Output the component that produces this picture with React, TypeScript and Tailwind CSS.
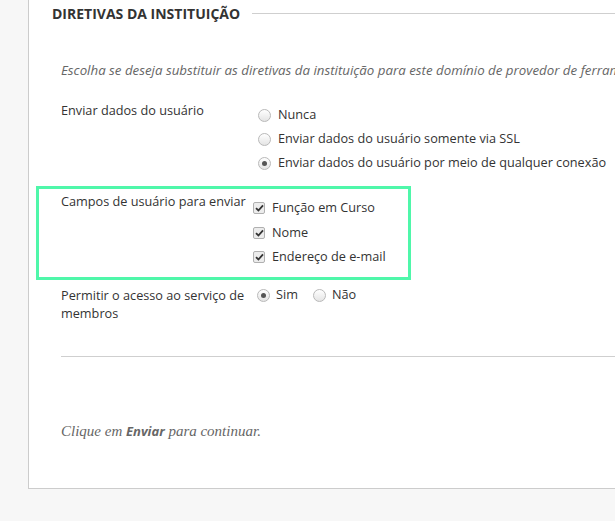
import React from "react";

const Radio = ({ checked = false }: { checked?: boolean }) => (
  <span className="w-[13px] h-[13px] shrink-0 rounded-full border border-[#b9b9b9] bg-gradient-to-b from-white to-[#e4e4e4] flex items-center justify-center">
    {checked && <span className="w-[5px] h-[5px] rounded-full bg-[#555]" />}
  </span>
);

const Check = () => (
  <span className="w-[12px] h-[12px] shrink-0 rounded-[2px] border border-[#b0b0b0] bg-[#ececec] flex items-center justify-center">
    <svg width="9" height="8" viewBox="0 0 9 8">
      <path d="M1 4.2 L3.4 6.5 L8 1.3" fill="none" stroke="#333" strokeWidth="1.8" />
    </svg>
  </span>
);

const App = () => {
  return (
    <div
      className="w-[615px] h-[521px] bg-[#f7f7f7] overflow-hidden text-[12.7px] text-[#333]"
      style={{ fontFamily: '"Open Sans", "Liberation Sans", sans-serif' }}
    >
      <div className="ml-[28px] h-[489px] bg-white border-l border-b border-[#cccccc]">
        {/* legend */}
        <div className="flex items-center h-[26px] pl-[23px]">
          <h2 className="text-[14px] font-bold text-[#333]">
            DIRETIVAS DA INSTITUIÇÃO
          </h2>
          <div className="flex-1 ml-[12px] border-t border-[#cfcfcf]" />
        </div>

        <div className="pl-[32px]">
          <p className="mt-[34px] italic text-[13.3px] text-[#666] whitespace-nowrap leading-[20px]">
            Escolha se deseja substituir as diretivas da instituição para este domínio de provedor de ferramentas.
          </p>

          <div className="mt-[20px] flex">
            <div className="w-[195px] leading-[20px]">Enviar dados do usuário</div>
            <div className="pt-[5px] flex flex-col gap-[4px]">
              <label className="flex items-center gap-[7px] h-[20px] pl-[2px] whitespace-nowrap">
                <Radio /> <span>Nunca</span>
              </label>
              <label className="flex items-center gap-[7px] h-[20px] pl-[2px] whitespace-nowrap">
                <Radio /> <span>Enviar dados do usuário somente via SSL</span>
              </label>
              <label className="flex items-center gap-[7px] h-[20px] pl-[2px] whitespace-nowrap">
                <Radio checked /> <span>Enviar dados do usuário por meio de qualquer conexão</span>
              </label>
            </div>
          </div>
        </div>

        <div className="ml-[7px] mt-[13px] w-[375px] h-[94px] border-[3px] border-[#4ff7aa] pl-[22px] pt-[2px] flex">
          <div className="w-[192px] shrink-0 leading-[20px] whitespace-nowrap">Campos de usuário para enviar</div>
          <div className="pt-[7px] flex flex-col gap-[4.5px]">
            <label className="flex items-center h-[20px] whitespace-nowrap">
              <Check /> <span className="ml-[7px]">Função em Curso</span>
            </label>
            <label className="flex items-center h-[20px] whitespace-nowrap">
              <Check /> <span className="ml-[7px]">Nome</span>
            </label>
            <label className="flex items-center h-[20px] whitespace-nowrap">
              <Check /> <span className="ml-[7px]">Endereço de e-mail</span>
            </label>
          </div>
        </div>

        <div className="pl-[32px]">
          <div className="mt-[6px] flex">
            <div className="w-[190px] leading-[18px]">Permitir o acesso ao serviço de membros</div>
            <div className="pl-[6px] flex items-center h-[18px] whitespace-nowrap">
              <Radio checked />
              <span className="ml-[6px]">Sim</span>
              <span className="ml-[15px]"><Radio /></span>
              <span className="ml-[6px]">Não</span>
            </div>
          </div>

          <div className="mt-[34px] border-t border-[#cfcfcf]" />

          <p
            className="mt-[64px] italic text-[#666] leading-[20px] text-[15px]"
            style={{ fontFamily: '"Liberation Serif", serif' }}
          >
            Clique em{" "}
            <b
              className="font-bold text-[13px]"
              style={{ fontFamily: '"Open Sans", sans-serif' }}
            >
              Enviar
            </b>{" "}
            para continuar.
          </p>
        </div>
      </div>
    </div>
  );
};

export default App;
